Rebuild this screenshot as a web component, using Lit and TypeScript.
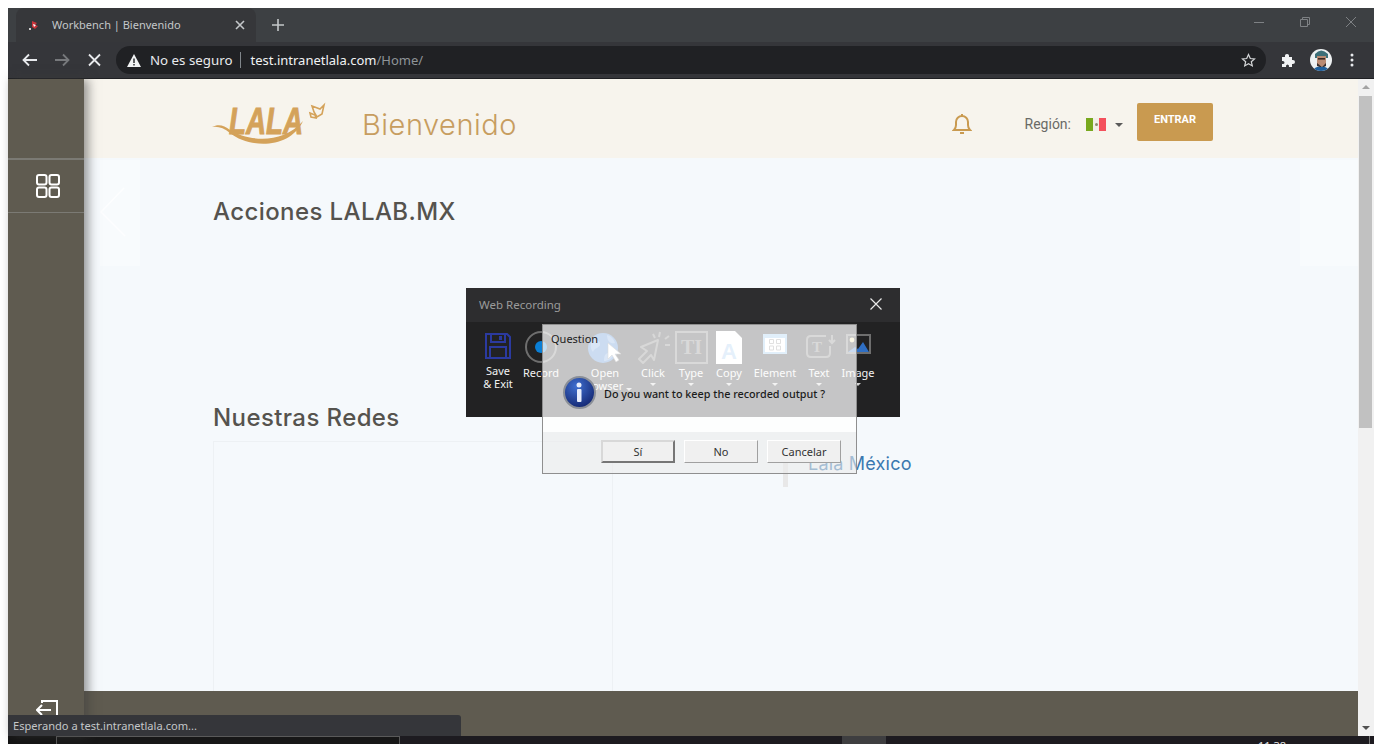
import { LitElement, html, css, svg } from 'lit';
import { customElement } from 'lit/decorators.js';

// toolbar of the recorder window: w = slot width, ml = space before the slot
const TOOLS = [
  { label: 'Save', label2: '& Exit', w: 36, ml: 0, icon: 'save', caret: false },
  { label: 'Record', label2: '', w: 50, ml: 0, icon: 'record', caret: false },
  { label: 'Open', label2: 'Browser', w: 42, ml: 18, icon: 'globe', caret: true },
  { label: 'Click', label2: '', w: 42, ml: 6, icon: 'click', caret: true },
  { label: 'Type', label2: '', w: 34, ml: 0, icon: 'type', caret: true },
  { label: 'Copy', label2: '', w: 42, ml: 0, icon: 'copy', caret: true },
  { label: 'Element', label2: '', w: 50, ml: 0, icon: 'element', caret: true },
  { label: 'Text', label2: '', w: 38, ml: 0, icon: 'text', caret: true },
  { label: 'Image', label2: '', w: 40, ml: 0, icon: 'image', caret: true },
];

const ICONS: Record<string, unknown> = {
  save: svg`<path d="M8 4h21l3 3v21H8z" fill="none" stroke="#2b3aa0" stroke-width="2"/><path d="M13 4v8h14V4M12 28V17h16v11" fill="none" stroke="#2b3aa0" stroke-width="2"/><rect x="21" y="6" width="3" height="4" fill="#2b3aa0"/>`,
  record: svg`<circle cx="20" cy="17" r="15" fill="none" stroke="#6e6e6e" stroke-width="2"/><circle cx="20" cy="17" r="6" fill="#0a7fd6"/>`,
  globe: svg`<circle cx="18" cy="18" r="15" fill="#3b78c8"/><path d="M8 9c5 1 8 3 7 6s-6 3-7 7c-3-3-3-9 0-13zM22 5c4 1 7 4 8 8-4 1-8-1-8-8zM20 25c3-3 7-3 9-1-2 5-6 7-10 7 0-2 0-4 1-6z" fill="#6f9fdc"/><path d="M23 13v16l4-4 4 7 3-2-4-6h6z" fill="#fff" stroke="#777" stroke-width=".6"/>`,
  click: svg`<path d="M25 10L8 17l6 4-8 8 4 4 8-8 3 5z" fill="none" stroke="#6a6a6a" stroke-width="2" stroke-linejoin="round"/><path d="M27 2l-1 5M36 6l-4 3M37 15h-5M20 4l2 4" stroke="#6a6a6a" stroke-width="2" fill="none"/>`,
  type: svg`<rect x="5" y="2" width="31" height="31" fill="none" stroke="#6e6e6e" stroke-width="2"/><text x="20.500" y="24" text-anchor="middle" font-family="Liberation Serif" font-weight="700" font-size="20" fill="#6e6e6e">TI</text>`,
  copy: svg`<path d="M7 1h19l7 7v26H7z" fill="#fff"/><text x="20" y="29" text-anchor="middle" font-family="Liberation Sans" font-weight="700" font-size="22" fill="#9cc6ee">A</text>`,
  element: svg`<rect x="8" y="4" width="24" height="20" fill="#8cc2ec"/><rect x="10" y="8" width="20" height="14" fill="#fff"/><path d="M14.500 9.500h4v4h-4zM21.500 9.500h4v4h-4zM14.500 16h4v4h-4zM21.500 16h4v4h-4z" fill="none" stroke="#8a8a8a"/>`,
  text: svg`<path d="M27 6H12q-4 0-4 4v13q0 4 4 4h15q4 0 4-4V16" fill="none" stroke="#6e6e6e" stroke-width="2"/><text x="18" y="22" text-anchor="middle" font-family="Liberation Serif" font-weight="700" font-size="15" fill="#6e6e6e">T</text><path d="M33 5v8m-3-3l3 3 3-3" fill="none" stroke="#6e6e6e" stroke-width="2"/>`,
  image: svg`<rect x="9" y="5" width="23" height="18" fill="none" stroke="#6e6e6e" stroke-width="2"/><path d="M10 22l7-5 3 2 5-7 6 10z" fill="#2f6fc4"/><circle cx="14" cy="10" r="2.400" fill="#f3e3a0"/>`,
};

@customElement('app-root')
export class AppRoot extends LitElement {
  static styles = css`
    :host {
      display: flex;
      flex-direction: column;
      position: relative;
      width: 1382px;
      height: 744px;
      box-sizing: border-box;
      padding: 8px 8px 0;
      background: #fff;
      overflow: hidden;
      font-family: 'Noto Sans', 'Open Sans', sans-serif;
    }

    /* browser frame */
    .tabstrip {
      height: 34px;
      background: #3d4043;
      display: flex;
      align-items: stretch;
    }
    .tab {
      width: 240px;
      margin-left: 8px;
      background: #36373a;
      border-radius: 8px 8px 0 0;
      display: flex;
      align-items: center;
      color: #c4c7c9;
      font-size: 11px;
      box-sizing: border-box;
      padding: 0 11px 0 13px;
    }
    .tab-title { margin-left: 13px; flex: 1; padding-bottom: 2px; }
    .newtab { margin-left: 16px; align-self: center; display: flex; }
    .winctl { margin-left: auto; display: flex; align-items: flex-start; gap: 36px; padding: 9px 18px 0 0; }
    .toolbar {
      height: 36px;
      background: #35363a;
      display: flex;
      align-items: center;
      border-bottom: 1px solid #1f2023;
      box-sizing: content-box;
    }
    .nav { display: flex; align-items: center; gap: 18px; margin-left: 14px; }
    .omnibox {
      margin-left: 15px;
      width: 1150px;
      height: 28px;
      border-radius: 14px;
      background: #202124;
      display: flex;
      align-items: center;
      box-sizing: border-box;
      padding: 0 10px 0 11px;
      color: #e8eaed;
      font-size: 13.300px;
    }
    .insecure { margin-left: 9px; }
    .omni-sep { width: 1px; height: 16px; background: #80868b; margin: 0 9px 0 8px; }
    .url { color: #f1f3f4; font-size: 13px; }
    .url span { color: #8f9498; }
    .star { margin-left: auto; display: flex; }
    .tb-right { display: flex; align-items: center; margin-left: 15px; gap: 14px; }
    .kebab { margin-left: 4px; }

    /* page */
    .page {
      flex: 1;
      min-height: 0;
      display: grid;
      grid-template-columns: 76px 1fr 16px;
    }
    .sidebar {
      background: #5f5b50;
      display: flex;
      flex-direction: column;
      align-items: stretch;
      box-shadow: 4px 0 10px rgba(60, 60, 60, 0.55);
      z-index: 2;
    }
    .side-top { height: 79px; border-bottom: 2px solid #7b7a74; }
    .side-apps {
      height: 52px;
      border-bottom: 1px solid #7b7a74;
      display: flex;
      align-items: center;
      justify-content: center;
      padding-left: 4px;
    }
    .side-exit { margin-top: auto; display: flex; justify-content: center; padding: 0 0 18px 2px; }

    .main { display: flex; flex-direction: column; min-width: 0; position: relative; }
    .header {
      height: 79px;
      box-sizing: border-box;
      background: #f7f4ed;
      display: flex;
      align-items: center;
      padding: 12px 145px 0 126px;
    }
    .logo { display: block; margin-top: -3px; }
    .welcome {
      margin-left: 36px;
      font-family: Inter, 'Noto Sans', sans-serif;
      font-weight: 300;
      font-size: 29px;
      letter-spacing: 0.5px;
      color: #c79d5f;
    }
    .head-right { margin-left: auto; display: flex; align-items: center; }
    .bell { display: flex; margin: -2px 0 0 -1px; }
    .region {
      margin: -2px 0 0 53px;
      font-family: Roboto, sans-serif;
      font-size: 14px;
      color: #6a6a66;
    }
    .flag { display: flex; width: 20px; height: 13px; margin-left: 15px; align-items: center; }
    .flag i { flex: 1; height: 13px; }
    .flag .g { background: #78a81e; }
    .flag .w { background: #f2efe8; display: flex; align-items: center; justify-content: center; }
    .flag .w b { width: 3px; height: 3px; border-radius: 50%; background: #8d8a70; }
    .flag .r { background: #f4505c; }
    .caret {
      width: 0; height: 0; margin: 0 14px 0 9px;
      border: 4px solid transparent;
      border-top-color: #5a5a5a;
      border-bottom: 0;
    }
    .enter {
      width: 76px;
      height: 38px;
      margin-top: -6px;
      border: 0;
      border-radius: 2px;
      background: #c99a50;
      color: #fff;
      font-family: Roboto, sans-serif;
      font-weight: 700;
      font-size: 11px;
      padding: 0 0 4px;
    }

    .content {
      flex: 1;
      min-height: 0;
      background: #f5f9fc;
      padding: 0 0 0 129px;
      display: flex;
      flex-direction: column;
      overflow: hidden;
    }
    h2 {
      margin: 0;
      font-family: Inter, 'Noto Sans', sans-serif;
      font-weight: 500;
      font-size: 24px;
      line-height: 30px;
      letter-spacing: 0.4px;
      color: #55534e;
    }
    .h-actions { margin-top: 39px; }
    .h-nets { margin-top: 176px; }
    .nets { flex: 1; display: flex; margin-top: 8px; min-height: 0; }
    .net-card {
      width: 400px;
      box-sizing: border-box;
      border: 1px solid #edf1f4;
      border-bottom: 0;
    }
    .net-side { display: flex; align-items: flex-start; padding: 11px 0 0 170px; gap: 20px; }
    .net-mark { width: 5px; height: 27px; background: #e8e8e8; margin-top: 8px; }
    .net-name {
      font-family: Inter, 'Noto Sans', sans-serif;
      font-size: 18px;
      letter-spacing: 0.2px;
      line-height: 24px;
      color: #3a78b0;
    }
    .footer { height: 45px; background: #5f5b50; }
    .arrow-l, .arrow-r {
      position: absolute;
      top: 81px;
      height: 106px;
      background: #f8fbfd;
    }
    .arrow-l { left: 16px; width: 40px; }
    .arrow-r { right: 0; width: 58px; }

    .scrollbar { background: #f1f1f1; display: flex; flex-direction: column; align-items: center; }
    .sb-up { margin-top: 6px; border: 4px solid transparent; border-bottom: 4px solid #a3a3a3; border-top: 0; width: 0; }
    .sb-thumb { width: 13px; height: 332px; background: #c1c1c1; margin: 7px 1px 0 0; }
    .sb-down { margin-top: auto; margin-bottom: 6px; border: 4px solid transparent; border-top: 4px solid #505050; border-bottom: 0; width: 0; }

    .status {
      position: absolute;
      left: 8px;
      bottom: 8px;
      width: 453px;
      height: 21px;
      background: #35363a;
      border-radius: 0 3px 0 0;
      color: #c4c7c9;
      font-size: 11.100px;
      line-height: 21px;
      padding-left: 5px;
      box-sizing: border-box;
      z-index: 3;
    }

    .taskbar { height: 8px; background: #1d1b20; display: flex; align-items: flex-start; overflow: hidden; }
    .tk-start { width: 48px; height: 8px; background: #131313; }
    .tk-search { width: 344px; height: 8px; background: #171717; border: 1px solid #5a5a5a; border-bottom: 0; box-sizing: border-box; }
    .tk-app { width: 44px; height: 8px; margin-left: 442px; background: #3e3e40; }
    .tk-clock { margin-left: 372px; color: #e6e6e6; font-size: 11px; line-height: 11px; padding-top: 4px; }
    .tk-show { margin-left: auto; margin-right: 4px; width: 1px; height: 8px; background: #777; }

    /* recorder window */
    .recorder {
      position: absolute;
      left: 466px;
      top: 288px;
      width: 434px;
      height: 129px;
      background: #222223;
      z-index: 4;
      color: #f2f2f2;
      font-size: 11px;
    }
    .rec-title {
      height: 34px;
      box-sizing: border-box;
      background: #2d2d2f;
      color: #9b9b9b;
      font-size: 11.500px;
      display: flex;
      align-items: center;
      justify-content: space-between;
      padding: 0 18px 2px 13px;
    }
    .rec-tools { display: flex; padding: 8px 0 0 14px; }
    .tool { display: flex; flex-direction: column; align-items: center; flex: none; white-space: nowrap; line-height: 13px; }
    .tool svg { display: block; flex: none; }
    .tool-label { margin-top: -2px; text-align: center; }
    .tool-save .tool-label { margin-top: -4px; }
    .tool-caret {
      width: 0; height: 0; margin-top: 4px;
      border: 3px solid transparent;
      border-top-color: #cfcfcf;
      border-bottom: 0;
    }
    .tool-open { position: relative; }
    .tool-open .tool-label { margin-left: -6px; }
    .tool-open .line1 { padding-left: 6px; }
    .tool-open .tool-caret { position: absolute; right: -6px; top: 54px; }

    /* question dialog */
    .question {
      position: absolute;
      left: 542px;
      top: 324px;
      width: 315px;
      height: 150px;
      box-sizing: border-box;
      border: 1px solid #8f8f8f;
      z-index: 5;
      display: flex;
      flex-direction: column;
      color: #1c1c1c;
      font-size: 11px;
    }
    .q-top { height: 107px; background: rgba(255, 255, 255, 0.74); box-sizing: border-box; padding: 6px 0 0 8px; }
    .q-msg { display: flex; align-items: center; margin: 30px 0 0 12px; gap: 8px; font-size: 10.800px; font-weight: 500; }
    .q-msg span { margin-top: 1px; }
    .q-bottom {
      flex: 1;
      background: rgba(235, 235, 235, 0.6);
      display: flex;
      justify-content: flex-end;
      gap: 9px;
      padding: 8px 15px 0 0;
    }
    .q-btn {
      width: 74px;
      height: 23px;
      box-sizing: border-box;
      padding: 0;
      background: #f0f0f0;
      border: 1px solid;
      border-color: #fff #a0a0a0 #a0a0a0 #fff;
      color: #333;
      font-family: inherit;
      font-size: 11px;
    }
    .q-btn.def { border: 2px solid; border-color: #d8d8d8 #767676 #767676 #d8d8d8; }
  `;

  renderLogo() {
    return html`<svg class="logo" width="116" height="48" viewBox="0 0 116 48">
      <path d="M2 28C8 25 14 26 20 31C38 42 72 46 93 22C80 50 40 50 20 34C14 29 8 27 2 28Z" fill="#d4a25a"/>
      <text x="19" y="35" textLength="74" lengthAdjust="spacingAndGlyphs" font-family="Liberation Sans" font-weight="700" font-style="italic" font-size="36" fill="#d4a25a" stroke="#d4a25a" stroke-width="1">LALA</text>
      <path d="M102 7l8 3 4-4-2 9-5 3-3-5zM100 14l5 2 1 3-5-1z" fill="none" stroke="#d4a25a" stroke-width="1.600"/>
    </svg>`;
  }

  renderAvatar() {
    return html`<svg width="22" height="22" viewBox="0 0 22 22">
      <clipPath id="av"><circle cx="11" cy="11" r="11"/></clipPath>
      <g clip-path="url(#av)">
        <rect width="22" height="22" fill="#eef1f2"/>
        <path d="M5 5q6-7 13 0v4H5z" fill="#3d6f78"/>
        <path d="M7 7h9v8l-4 3-5-3z" fill="#b98a72"/>
        <rect x="8" y="9" width="7" height="1.600" fill="#3a2a24"/>
        <path d="M7 14l5 4 4-4v3l-4 2-5-2z" fill="#3a2d2a"/>
        <path d="M3 22q2-5 8-4 6-1 8 4z" fill="#1f5f9c"/>
      </g>
    </svg>`;
  }

  renderChrome() {
    return html`
      <div class="tabstrip">
        <div class="tab">
          <svg width="10" height="10" viewBox="0 0 10 10">
            <path d="M3 1l5 2-2 2 3 1-3 3-3-2z" fill="#c9333a"/><path d="M4 4l3 1-2 2z" fill="#fff"/><circle cx="1" cy="9" r="1" fill="#fff"/>
          </svg>
          <span class="tab-title">Workbench | Bienvenido</span>
          <svg width="10" height="10" viewBox="0 0 10 10"><path d="M1 1l8 8M9 1l-8 8" stroke="#c4c7c9" stroke-width="1.600"/></svg>
        </div>
        <div class="newtab">
          <svg width="12" height="12" viewBox="0 0 12 12"><path d="M6 0v12M0 6h12" stroke="#c4c7c9" stroke-width="1.600"/></svg>
        </div>
        <div class="winctl">
          <svg width="10" height="10" viewBox="0 0 10 10"><path d="M0 5.500h10" stroke="#7e8184"/></svg>
          <svg width="10" height="10" viewBox="0 0 10 10"><path d="M.5 2.500h7v7h-7zM2.500 2.500v-2h7v7h-2" fill="none" stroke="#7e8184"/></svg>
          <svg width="10" height="10" viewBox="0 0 10 10"><path d="M0 0l10 10M10 0L0 10" stroke="#7e8184"/></svg>
        </div>
      </div>
      <div class="toolbar">
        <div class="nav">
          <svg width="15" height="14" viewBox="0 0 15 14"><path d="M15 7H1.500M7 1.500L1.500 7 7 12.500" fill="none" stroke="#e8eaed" stroke-width="1.800"/></svg>
          <svg width="15" height="14" viewBox="0 0 15 14"><path d="M0 7h13.500M8 1.500L13.500 7 8 12.500" fill="none" stroke="#77797c" stroke-width="1.800"/></svg>
          <svg width="13" height="14" viewBox="0 0 13 14"><path d="M1 1.500l11 11M12 1.500l-11 11" stroke="#e8eaed" stroke-width="1.800"/></svg>
        </div>
        <div class="omnibox">
          <svg width="14" height="13" viewBox="0 0 14 13"><path d="M7 0l7 13H0z" fill="#f1f3f4"/><path d="M6.300 4.500h1.400v4.500H6.300zM6.300 10h1.400v1.400H6.300z" fill="#202124"/></svg>
          <span class="insecure">No es seguro</span>
          <span class="omni-sep"></span>
          <span class="url">test.intranetlala.com<span>/Home/</span></span>
          <svg class="star" width="15" height="15" viewBox="0 0 15 15"><path d="M7.500 1.500l1.800 4 4.200.4-3.200 2.800 1 4.200-3.800-2.200-3.800 2.200 1-4.200L1.500 5.900l4.200-.4z" fill="none" stroke="#d5d7d9" stroke-width="1.200"/></svg>
        </div>
        <div class="tb-right">
          <svg width="15" height="15" viewBox="0 0 15 15"><path d="M1 4h3q-.5-3 2-3t2 3h3v3q3-.5 3 2t-3 2v3H8q.4-2.500-1.500-2.500T5 14H1v-3q2.500.5 2.500-1.500T1 8z" fill="#f1f3f4"/></svg>
          ${this.renderAvatar()}
          <svg class="kebab" width="4" height="14" viewBox="0 0 4 14"><circle cx="2" cy="2" r="1.500" fill="#e8eaed"/><circle cx="2" cy="7" r="1.500" fill="#e8eaed"/><circle cx="2" cy="12" r="1.500" fill="#e8eaed"/></svg>
        </div>
      </div>
    `;
  }

  renderPage() {
    return html`
      <div class="page">
        <aside class="sidebar">
          <div class="side-top"></div>
          <div class="side-apps">
            <svg width="24" height="24" viewBox="0 0 24 24" fill="none" stroke="#fff" stroke-width="2">
              <rect x="1" y="1" width="9.500" height="9.500" rx="2"/><rect x="13.500" y="1" width="9.500" height="9.500" rx="2"/>
              <rect x="1" y="13.500" width="9.500" height="9.500" rx="2"/><rect x="13.500" y="13.500" width="9.500" height="9.500" rx="2"/>
            </svg>
          </div>
          <div class="side-exit">
            <svg width="22" height="18" viewBox="0 0 22 18" fill="none" stroke="#fff" stroke-width="2">
              <path d="M6 3V1h15v17M1 10h14M6 5l-5 5 5 5"/>
            </svg>
          </div>
        </aside>
        <div class="main">
          <header class="header">
            ${this.renderLogo()}
            <span class="welcome">Bienvenido</span>
            <div class="head-right">
              <span class="bell">
                <svg width="20" height="22" viewBox="0 0 20 22" fill="none" stroke="#c99a50" stroke-width="2">
                  <path d="M2 17q2-2 2-5V9a6 6 0 0 1 12 0v3q0 3 2 5zM10 1v2M8 20h4"/>
                </svg>
              </span>
              <span class="region">Región:</span>
              <span class="flag"><i class="g"></i><i class="w"><b></b></i><i class="r"></i></span>
              <span class="caret"></span>
              <button class="enter">ENTRAR</button>
            </div>
          </header>
          <div class="content">
            <h2 class="h-actions">Acciones LALAB.MX</h2>
            <h2 class="h-nets">Nuestras Redes</h2>
            <div class="nets">
              <div class="net-card"></div>
              <div class="net-side">
                <span class="net-mark"></span>
                <span class="net-name">Lala México</span>
              </div>
            </div>
          </div>
          <div class="footer"></div>
          <div class="arrow-l">
            <svg width="40" height="106" viewBox="0 0 40 106"><path d="M24 28L1 52l24 24" fill="none" stroke="#fdfeff" stroke-width="1.500"/></svg>
          </div>
          <div class="arrow-r"></div>
        </div>
        <div class="scrollbar">
          <span class="sb-up"></span>
          <span class="sb-thumb"></span>
          <span class="sb-down"></span>
        </div>
      </div>
    `;
  }

  renderRecorder() {
    return html`
      <div class="recorder">
        <div class="rec-title">
          <span>Web Recording</span>
          <svg width="12" height="12" viewBox="0 0 12 12"><path d="M.5.5l11 11M11.500.5l-11 11" stroke="#e8e8e8" stroke-width="1.200"/></svg>
        </div>
        <div class="rec-tools">
          ${TOOLS.map(
            (t) => html`
              <div class="tool tool-${t.icon === 'globe' ? 'open' : t.icon}" style="width:${t.w}px;margin-left:${t.ml}px">
                <svg width="40" height="38" viewBox="0 0 40 38" style="margin:0 -10px">${ICONS[t.icon]}</svg>
                <div class="tool-label"><span class="line1">${t.label}</span>${t.label2 ? html`<br />${t.label2}` : ''}</div>
                ${t.caret ? html`<span class="tool-caret"></span>` : ''}
              </div>
            `
          )}
        </div>
      </div>
    `;
  }

  renderQuestion() {
    return html`
      <div class="question">
        <div class="q-top">
          <div>Question</div>
          <div class="q-msg">
            <svg width="33" height="33" viewBox="0 0 33 33">
              <defs>
                <radialGradient id="ib" cx="40%" cy="30%" r="75%"><stop offset="0" stop-color="#3f6fd0"/><stop offset="1" stop-color="#12246e"/></radialGradient>
              </defs>
              <circle cx="16.500" cy="16.500" r="15.500" fill="url(#ib)" stroke="#8a8f98" stroke-width="2"/>
              <circle cx="16" cy="9" r="2.500" fill="#e8eefc"/>
              <rect x="14" y="13" width="4.500" height="13" rx="1" fill="#e8eefc"/>
            </svg>
            <span>Do you want to keep the recorded output ?</span>
          </div>
        </div>
        <div class="q-bottom">
          <button class="q-btn def">Sí</button>
          <button class="q-btn">No</button>
          <button class="q-btn">Cancelar</button>
        </div>
      </div>
    `;
  }

  render() {
    return html`
      ${this.renderChrome()}
      ${this.renderPage()}
      <div class="taskbar">
        <span class="tk-start"></span>
        <span class="tk-search"></span>
        <span class="tk-app"></span>
        <span class="tk-clock">11:38</span>
        <span class="tk-show"></span>
      </div>
      <div class="status">Esperando a test.intranetlala.com...</div>
      ${this.renderRecorder()}
      ${this.renderQuestion()}
    `;
  }
}
